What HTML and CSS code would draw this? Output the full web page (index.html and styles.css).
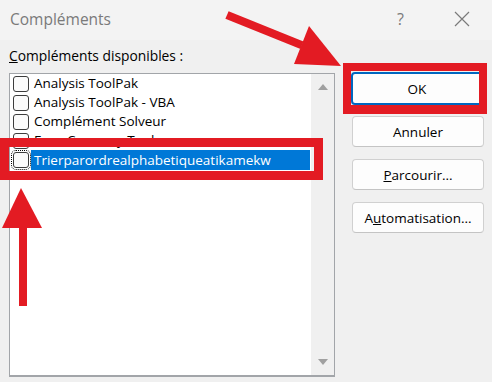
FILE: index.html
```html
<!DOCTYPE html>
<html lang="fr">
<head>
<meta charset="utf-8">
<title>Compléments</title>
<link rel="stylesheet" href="styles.css">
</head>
<body>
<div class="dialog">
  <div class="titlebar">
    <span class="title">Compléments</span>
    <span class="help">?</span>
    <svg class="close" width="16" height="16" viewBox="0 0 16 16"><path d="M1 1 L15 15 M15 1 L1 15" stroke="#7a7a7a" stroke-width="1.2" fill="none"/></svg>
  </div>
  <div class="content">
    <div class="left">
      <div class="label"><u>C</u>ompléments disponibles :</div>
      <div class="listbox">
        <div class="items">
          <div class="row"><span class="cb"></span><span class="txt">Analysis ToolPak</span></div>
          <div class="row"><span class="cb"></span><span class="txt">Analysis ToolPak - VBA</span></div>
          <div class="row"><span class="cb"></span><span class="txt">Complément Solveur</span></div>
          <div class="row"><span class="cb"></span><span class="txt">Euro Currency Tools</span></div>
          <div class="row"><span class="cb focus"></span><span class="txt sel">Trierparordrealphabetiqueatikamekw</span></div>
        </div>
        <div class="scrollbar">
          <span class="arrow up"></span>
          <span class="arrow down"></span>
        </div>
      </div>
    </div>
    <div class="buttons">
      <button class="btn default">OK</button>
      <button class="btn">Annuler</button>
      <button class="btn"><u>P</u>arcourir...</button>
      <button class="btn">A<u>u</u>tomatisation...</button>
    </div>
  </div>
  <div class="mark box-row"></div>
  <div class="mark box-ok"></div>
  <svg class="arrows" width="492" height="382" viewBox="0 0 492 382">
    <polygon fill="#e31b23" points="228.6,11.3 225.4,18.7 300.5,49 303.5,41.5"/>
    <polygon fill="#e31b23" points="309,26 294,64 341,66"/>
    <polygon fill="#e31b23" points="21,188 2,228 42,228"/>
    <polygon fill="#e31b23" points="19,226 27,226 27,306 19,306"/>
  </svg>
</div>
</body>
</html>
```

FILE: styles.css
```css
* { box-sizing: border-box; }
html, body { margin: 0; padding: 0; }
body {
  font-family: "Open Sans", "Noto Sans", sans-serif;
  font-size: 13.5px;
  color: #000;
  background: #f0f0f0;
}
.dialog {
  position: relative;
  width: 492px;
  height: 382px;
  background: #f0f0f0;
  overflow: hidden;
}
.titlebar {
  height: 40px;
  background: #f3f3f3;
  display: flex;
  align-items: center;
  padding-left: 10px;
}
.title {
  font-size: 15.5px;
  color: #7a7a7a;
  flex: 1;
  margin-top: -2px;
}
.help {
  font-size: 16px;
  color: #7a7a7a;
  margin-right: 50px;
  margin-top: -2px;
}
.close {
  margin-right: 22px;
  margin-top: -2px;
}
.content {
  display: flex;
  padding: 0 8px 0 9px;
}
.left {
  width: 326px;
  display: flex;
  flex-direction: column;
}
.label {
  height: 33px;
  line-height: 18px;
  padding-top: 7px;
  font-size: 13.8px;
}
.listbox {
  height: 304px;
  border: 1px solid #a2a5a9;
  border-bottom-width: 2px;
  background: #fff;
  display: flex;
}
.items {
  flex: 1;
  display: flex;
  flex-direction: column;
}
.row {
  height: 19px;
  display: flex;
  align-items: center;
  padding-left: 3px;
}
.cb {
  width: 16px;
  height: 16px;
  border: 1px solid #3c3c3c;
  border-radius: 3px;
  background: #fbfbfb;
  flex: none;
}
.cb.focus {
  outline: 1px dotted #000;
  outline-offset: 1px;
}
.txt {
  margin-left: 2px;
  padding: 0 3px;
  line-height: 19px;
  white-space: nowrap;
}
.txt.sel {
  flex: 1;
  background: #0078d7;
  color: #fff;
  height: 20px;
  line-height: 20px;
  margin-right: 1px;
}
.scrollbar {
  width: 23px;
  background: #f0f0f0;
  position: relative;
  display: flex;
  flex-direction: column;
  justify-content: space-between;
  align-items: center;
  padding: 10px 0 10px 0;
}
.arrow {
  width: 0;
  height: 0;
  border-left: 5px solid transparent;
  border-right: 5px solid transparent;
}
.arrow.up { border-bottom: 6px solid #a0a0a0; }
.arrow.down { border-top: 6px solid #a0a0a0; }
.buttons {
  margin-left: 17px;
  padding-top: 32px;
  display: flex;
  flex-direction: column;
  gap: 12px;
}
.btn {
  width: 132px;
  height: 31px;
  background: #fdfdfd;
  border: 1px solid #d0d0d0;
  border-bottom-color: #c4c4c4;
  border-radius: 4px;
  font-family: "Open Sans", "Noto Sans", sans-serif;
  font-size: 13.5px;
  color: #000;
  padding: 0;
}
.btn.default {
  height: 33px;
  border: 2px solid #0067c0;
  margin-left: -1px;
  margin-bottom: -1px;
}
.mark {
  position: absolute;
  border: 9px solid #e31b23;
}
.box-row {
  left: 0;
  top: 138px;
  width: 323px;
  height: 42px;
}
.box-ok {
  left: 343px;
  top: 63px;
  width: 144px;
  height: 51px;
  border-width: 8px;
  border-bottom-width: 9px;
}
.arrows {
  position: absolute;
  left: 0;
  top: 0;
  pointer-events: none;
}
```
